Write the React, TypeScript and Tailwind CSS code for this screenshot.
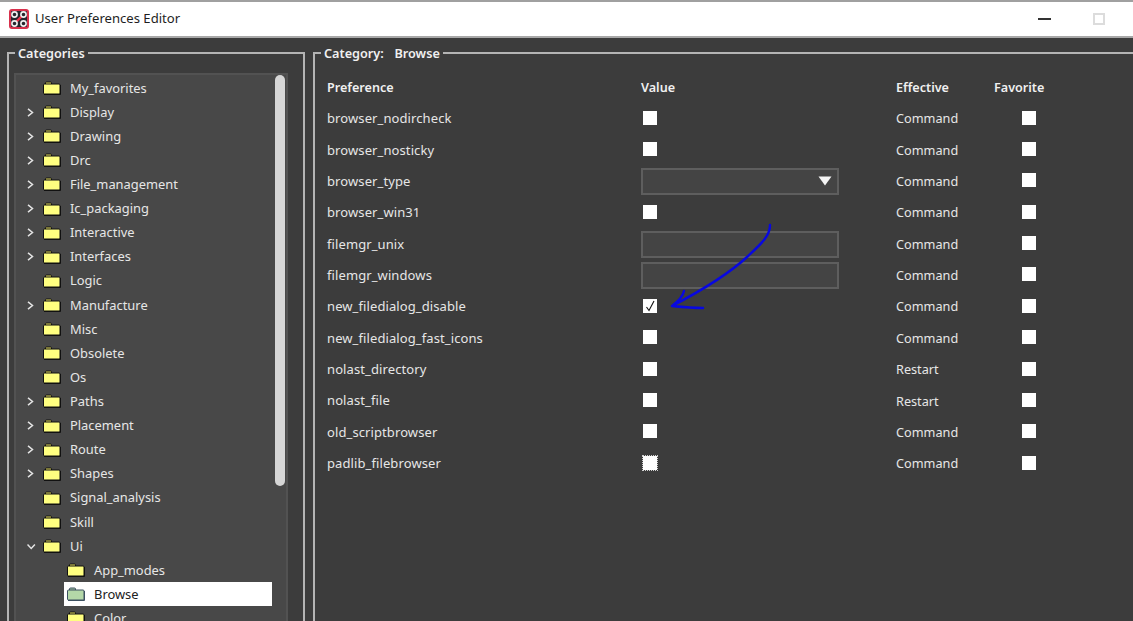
import React from "react";

const font = "[font-family:'Noto_Sans',sans-serif]";

function Folder({ selected }: { selected?: boolean }) {
  const fill = selected ? "#b4d8a8" : "#ffff80";
  return (
    <svg width="18" height="14" viewBox="0 0 18 14" className="shrink-0">
      <path d="M2.5 3.5V2a1 1 0 0 1 1-1h4a1 1 0 0 1 1 1v1.5" fill={selected ? "#9fc0a0" : "#e8e060"} stroke={selected ? "#3c5060" : "#111"} strokeWidth="1" />
      <rect x="0.5" y="3" width="16.5" height="10" rx="1" fill={fill} stroke={selected ? "#3c5060" : "#111"} strokeWidth="1" />
      <path d="M1 13.5H17.5V4" fill="none" stroke={selected ? "#3c5060" : "#111"} strokeWidth="1" />
    </svg>
  );
}

function Chevron({ down }: { down?: boolean }) {
  return (
    <svg width="9" height="9" viewBox="0 0 9 9" className="shrink-0">
      <path d={down ? "M0.5 2.5L4.2 6.5L7.9 2.5" : "M1 0.8L5.5 4.5L1 8.2"} fill="none" stroke="#e4e4e4" strokeWidth="1.5" />
    </svg>
  );
}

const tree: [string, boolean][] = [
  ["My_favorites", false],
  ["Display", true],
  ["Drawing", true],
  ["Drc", true],
  ["File_management", true],
  ["Ic_packaging", true],
  ["Interactive", true],
  ["Interfaces", true],
  ["Logic", false],
  ["Manufacture", true],
  ["Misc", false],
  ["Obsolete", false],
  ["Os", false],
  ["Paths", true],
  ["Placement", true],
  ["Route", true],
  ["Shapes", true],
  ["Signal_analysis", false],
  ["Skill", false],
];

type Kind = "check" | "checked" | "select" | "input" | "focus";
const prefs: [string, Kind, string][] = [
  ["browser_nodircheck", "check", "Command"],
  ["browser_nosticky", "check", "Command"],
  ["browser_type", "select", "Command"],
  ["browser_win31", "check", "Command"],
  ["filemgr_unix", "input", "Command"],
  ["filemgr_windows", "input", "Command"],
  ["new_filedialog_disable", "checked", "Command"],
  ["new_filedialog_fast_icons", "check", "Command"],
  ["nolast_directory", "check", "Restart"],
  ["nolast_file", "check", "Restart"],
  ["old_scriptbrowser", "check", "Command"],
  ["padlib_filebrowser", "focus", "Command"],
];

function Box({ checked, focus }: { checked?: boolean; focus?: boolean }) {
  return (
    <div
      className={`w-[14px] h-[14px] mb-[2px] bg-white flex items-center justify-center ${
        focus ? "outline-1 outline-dotted outline-[#d0d0d0]" : ""
      }`}
    >
      {checked && (
        <svg width="12" height="12" viewBox="0 0 12 12">
          <path d="M2.5 7L5 10.5L10 1" fill="none" stroke="#111" strokeWidth="1.1" />
        </svg>
      )}
    </div>
  );
}

function Value({ kind }: { kind: Kind }) {
  if (kind === "select")
    return (
      <div className="w-[198px] h-[27px] bg-[#444444] border-2 border-[#5e5e5e] flex items-center justify-end pr-[5px]">
        <svg width="14" height="10" viewBox="0 0 14 10">
          <path d="M0.5 0.5H13.5L7 9.5Z" fill="#f4f4f4" />
        </svg>
      </div>
    );
  if (kind === "input") return <div className="w-[198px] h-[27px] bg-[#444444] border-2 border-[#5e5e5e]" />;
  return (
    <div className="pl-[2px]">
      <Box checked={kind === "checked"} focus={kind === "focus"} />
    </div>
  );
}

function TreeRow({
  label,
  depth = 0,
  arrow,
  down,
  selected,
}: {
  label: string;
  depth?: number;
  arrow?: boolean;
  down?: boolean;
  selected?: boolean;
}) {
  return (
    <div className={`h-[24.12px] flex items-center shrink-0 ${depth ? "pl-[51px]" : "pl-[11px]"}`}>
      {!depth && <div className="w-[16px] flex items-center">{(arrow || down) && <Chevron down={down} />}</div>}
      <div
        className={`flex items-center h-[24px] ${
          selected ? "bg-white w-[208px] -ml-[3px] pl-[3px] text-[#222222]" : "text-[#e6e6e6]"
        }`}
      >
        <Folder selected={selected} />
        <span className="ml-[9px] whitespace-nowrap text-[12.9px]">{label}</span>
      </div>
    </div>
  );
}

export default function App() {
  return (
    <div className={`relative w-[1133px] h-[621px] overflow-hidden flex flex-col bg-[#3c3c3c] text-[13px] leading-none ${font}`}>
      <header className="h-[38px] shrink-0 bg-white border-t-2 border-b-2 border-t-[#a0a0a0] border-b-[#a8a8a8] flex items-center pl-[9px] text-[#1e1e1e]">
        <svg width="20" height="20" viewBox="0 0 20 20" className="shrink-0">
          <rect x="1" y="1" width="18" height="18" rx="2" fill="#26262e" stroke="#d8304c" strokeWidth="2" />
          <path d="M6 14L14 6" stroke="#f0304a" strokeWidth="2.4" />
          <circle cx="5.5" cy="5.5" r="2.6" fill="#26262e" stroke="#f0f0f0" strokeWidth="1.6" />
          <circle cx="14.5" cy="5.5" r="2.6" fill="#26262e" stroke="#f0f0f0" strokeWidth="1.6" />
          <circle cx="5.5" cy="14.5" r="2.6" fill="#26262e" stroke="#f0f0f0" strokeWidth="1.6" />
          <circle cx="14.5" cy="14.5" r="2.6" fill="#26262e" stroke="#f0f0f0" strokeWidth="1.6" />
        </svg>
        <span className="ml-[6px] text-[13.1px]">User Preferences Editor</span>
        <div className="ml-auto flex items-center">
          <div className="w-[13px] h-[2px] bg-[#333333]" />
          <div className="ml-[42px] mr-[28px] w-[12px] h-[12px] border-2 border-[#dcdcdc]" />
        </div>
      </header>

      <main className="flex-1 min-h-0 flex pl-[7px] pt-[8px] gap-[8px]">
        <fieldset className="w-[298px] border-2 border-b-0 border-[#b4b4b4] pl-[5px] pr-[15px] pt-[13px] min-h-[600px] min-w-0">
          <legend className="ml-[1px] px-[3px] font-semibold text-[12.7px] text-[#f0f0f0] leading-[14px]">Categories</legend>
          <div className="relative h-[560px] bg-[#484848] border-2 border-[#525252] flex flex-col pt-[1px] overflow-hidden">
            {tree.map(([t, a]) => (
              <TreeRow key={t} label={t} arrow={a} />
            ))}
            <TreeRow label="Ui" down />
            <TreeRow label="App_modes" depth={1} />
            <TreeRow label="Browse" depth={1} selected />
            <TreeRow label="Color" depth={1} />
            <div className="absolute right-[1px] top-[0px] w-[10px] h-[411px] rounded-full bg-[#d6d6d6]" />
          </div>
        </fieldset>

        <fieldset className="flex-1 mr-[-20px] border-2 border-r-0 border-b-0 border-[#b4b4b4] pl-[12px] pt-[13px] min-w-0">
          <legend className="-ml-[6px] px-[3px] font-semibold text-[12.7px] [word-spacing:2px] text-[#f0f0f0] leading-[14px] whitespace-pre">Category:  Browse</legend>
          <div className="grid grid-cols-[314px_255px_98px_1fr] items-center h-[30px] font-semibold text-[12.6px] text-[#f0f0f0]">
            <div>Preference</div>
            <div>Value</div>
            <div>Effective</div>
            <div>Favorite</div>
          </div>
          <div className="flex flex-col text-[#e6e6e6]">
            {prefs.map(([name, kind, eff]) => (
              <div key={name} className="grid grid-cols-[314px_255px_126px_1fr] items-center h-[31.36px]">
                <div className="tracking-[0.1px]">{name}</div>
                <Value kind={kind} />
                <div className="text-[12.7px]">{eff}</div>
                <Box />
              </div>
            ))}
          </div>
        </fieldset>
      </main>

      <svg className="absolute left-[660px] top-[215px] pointer-events-none" width="60" height="110" viewBox="660 215 60 110" style={{ overflow: "visible" }}>
        <path
          d="M770 225C770 236 762 243 747 257C733 270 712 285 672 306M684 291C683 296 680 300 672 306C682 307 693 308 703 308"
          fill="none"
          stroke="#0808e0"
          strokeWidth="2.4"
          strokeLinecap="round"
          strokeLinejoin="round"
        />
      </svg>
    </div>
  );
}
